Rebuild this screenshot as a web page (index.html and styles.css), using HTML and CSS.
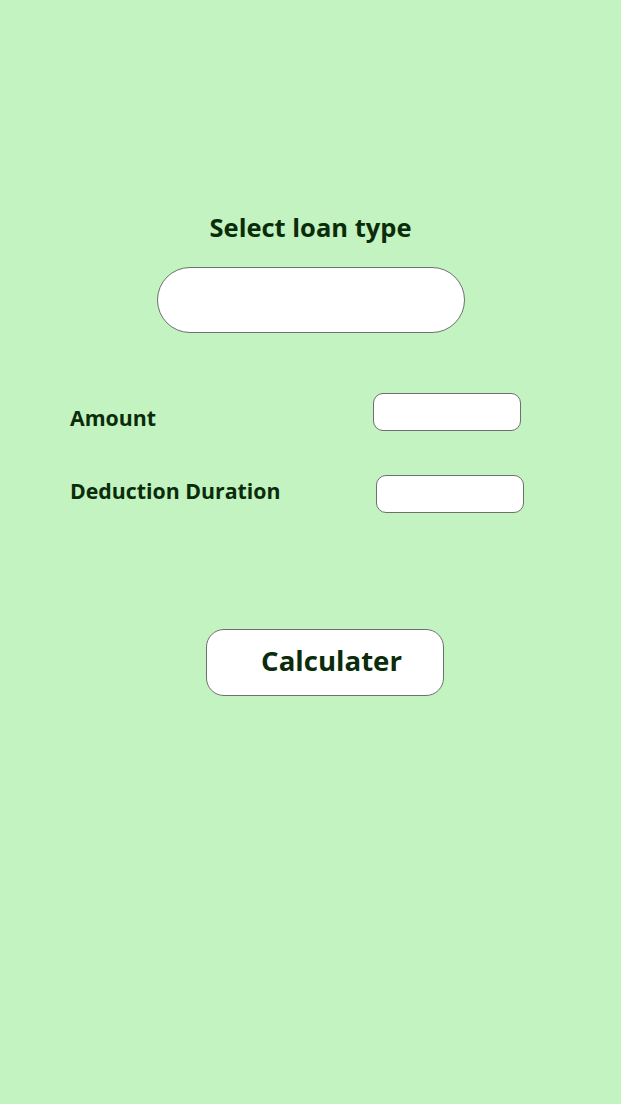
FILE: index.html
```html
<!DOCTYPE html>
<html>
<head>
<meta charset="utf-8">
<link rel="stylesheet" href="styles.css">
</head>
<body>
<main class="page">
  <h1 class="title">Select loan type</h1>
  <div class="select-box"></div>
  <div class="field field-amount">
    <label class="label">Amount</label>
    <input class="input" type="text">
  </div>
  <div class="field field-duration">
    <label class="label">Deduction Duration</label>
    <input class="input" type="text">
  </div>
  <button class="calc-btn">Calculater</button>
</main>
</body>
</html>
```

FILE: styles.css
```css
html, body {
  margin: 0;
  padding: 0;
}
body {
  background: #c2f3c0;
  width: 621px;
  height: 1104px;
  font-family: "Open Sans", "Noto Sans", sans-serif;
  color: #0a2c0a;
}
.page {
  display: flex;
  flex-direction: column;
  align-items: center;
  padding-top: 209px;
}
.title {
  margin: 0;
  font-size: 25.5px;
  font-weight: 700;
  line-height: 36px;
}
.select-box {
  margin-top: 22px;
  width: 308px;
  height: 66px;
  box-sizing: border-box;
  background: #fff;
  border: 1px solid #6f6f6f;
  border-radius: 33px;
}
.field {
  align-self: stretch;
  display: flex;
  align-items: center;
  padding-left: 70px;
}
.field-amount {
  margin-top: 59px;
  padding-right: 100px;
}
.field-duration {
  margin-top: 43px;
  padding-right: 97px;
}
.label {
  font-size: 21.3px;
  font-weight: 700;
}
.field-amount .label { margin-top: 11px; }
.field-duration .label { margin-top: -8px; }
.input {
  margin-left: auto;
  width: 148px;
  height: 38px;
  box-sizing: border-box;
  background: #fff;
  border: 1px solid #6f6f6f;
  border-radius: 10px;
  padding: 0;
  outline: none;
}
.calc-btn {
  margin-top: 116px;
  margin-left: 29px;
  width: 238px;
  height: 67px;
  box-sizing: border-box;
  background: #fff;
  border: 1px solid #6f6f6f;
  border-radius: 18px;
  padding: 0 0 6px 13px;
  font-family: "Open Sans", "Noto Sans", sans-serif;
  font-size: 27.6px;
  font-weight: 700;
  color: #0a2c0a;
}
```
